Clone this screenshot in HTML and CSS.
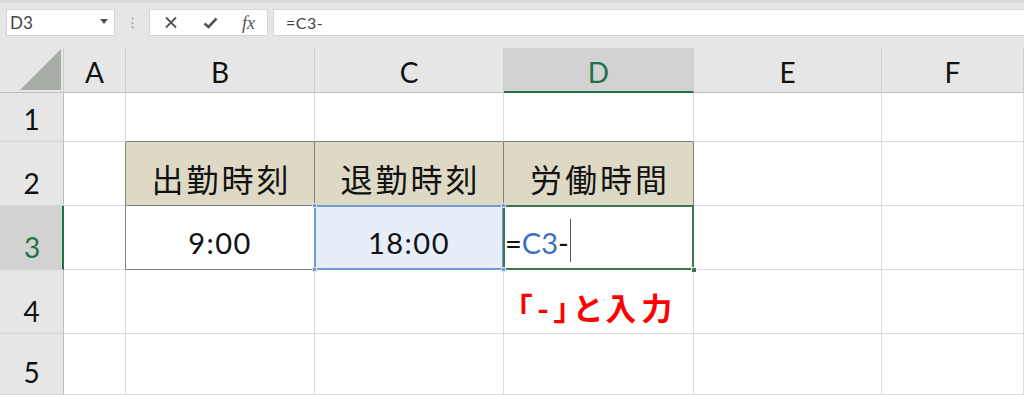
FILE: index.html
```html
<!DOCTYPE html>
<html lang="ja">
<head>
<meta charset="utf-8">
<title>Excel</title>
<link rel="stylesheet" href="styles.css">
</head>
<body>
<div class="fbar">
  <div class="namebox">
    <span class="nb-text">D3</span>
    <svg class="caret" width="8" height="5" viewBox="0 0 8 5"><path d="M0 0H8L4 5Z" fill="#555"/></svg>
  </div>
  <div class="grip">
    <svg width="3" height="12" viewBox="0 0 3 12"><circle cx="1.5" cy="1.5" r="1" fill="#9a9a9a"/><circle cx="1.5" cy="6" r="1" fill="#9a9a9a"/><circle cx="1.5" cy="10.5" r="1" fill="#9a9a9a"/></svg>
  </div>
  <div class="fbtns">
    <svg class="ico" width="14" height="13" viewBox="0 0 14 13"><path d="M2 1.5L12 11.5M12 1.5L2 11.5" stroke="#555" stroke-width="1.8" fill="none"/></svg>
    <svg class="ico" width="15" height="12" viewBox="0 0 15 12"><path d="M1.5 6.5L5.5 10L13.5 1.5" stroke="#555" stroke-width="2.6" fill="none"/></svg>
    <span class="fx">fx</span>
  </div>
  <div class="finput">=C3-</div>
</div>
<div class="sheet">
  <div class="corner"><svg width="41" height="41" viewBox="0 0 41 41"><path d="M41 0V41H0Z" fill="#a9ada8"/></svg></div>
  <div class="ch">A</div>
  <div class="ch">B</div>
  <div class="ch">C</div>
  <div class="ch ch-sel">D</div>
  <div class="ch">E</div>
  <div class="ch">F</div>

  <div class="rh">1</div>
  <div class="c"></div>
  <div class="c bb"></div>
  <div class="c bb"></div>
  <div class="c bb"></div>
  <div class="c"></div>
  <div class="c"></div>

  <div class="rh">2</div>
  <div class="c br"></div>
  <div class="c t th">出勤時刻</div>
  <div class="c t th">退勤時刻</div>
  <div class="c t th">労働時間</div>
  <div class="c"></div>
  <div class="c"></div>

  <div class="rh rh-sel">3</div>
  <div class="c br"></div>
  <div class="c t num">9:00</div>
  <div class="c t num ref">18:00<span class="h h-tl"></span><span class="h h-tr"></span><span class="h h-bl"></span><span class="h h-br"></span></div>
  <div class="c t edit"><span class="eq">=</span><span class="blue">C3</span><span>-</span><span class="cursor"></span><span class="handle"></span></div>
  <div class="c"></div>
  <div class="c"></div>

  <div class="rh">4</div>
  <div class="c"></div>
  <div class="c"></div>
  <div class="c"></div>
  <div class="c note"><span>「-」と入力</span></div>
  <div class="c"></div>
  <div class="c"></div>

  <div class="rh">5</div>
  <div class="c"></div>
  <div class="c"></div>
  <div class="c"></div>
  <div class="c"></div>
  <div class="c"></div>
  <div class="c"></div>
</div>
</body>
</html>
```
FILE: styles.css
```css
* { box-sizing: border-box; }
html, body {
  margin: 0;
  padding: 0;
  width: 1024px;
  height: 395px;
  overflow: hidden;
  background: #ffffff;
  font-family: "Lato", "Noto Sans CJK JP", sans-serif;
}

.fbar {
  height: 48px;
  background: #e6e6e6;
  border-top: 3px solid #dadada;
  display: flex;
  align-items: flex-start;
  padding: 6px 0 0 6px;
}
.namebox {
  width: 109px;
  height: 27px;
  background: #fff;
  border: 1px solid #d6d6d6;
  display: flex;
  align-items: center;
  justify-content: space-between;
  padding: 0 6px 0 3px;
}
.nb-text {
  font-size: 17px;
  color: #444;
  line-height: 1;
}
.caret { margin-top: -2px; }
.grip {
  width: 34px;
  height: 27px;
  display: flex;
  align-items: center;
  justify-content: center;
}
.fbtns {
  width: 119px;
  height: 27px;
  background: #fff;
  border: 1px solid #d6d6d6;
  display: flex;
  align-items: center;
  padding-left: 14px;
  gap: 25px;
}
.fx {
  font-family: "Liberation Serif", serif;
  font-style: italic;
  font-size: 18px;
  color: #555;
  line-height: 1;
  margin-left: -1px;
}
.finput {
  margin-left: 5px;
  flex: 1;
  height: 27px;
  background: #fff;
  border: 1px solid #d6d6d6;
  border-right: none;
  font-size: 16px;
  color: #444;
  display: flex;
  align-items: center;
  padding-left: 12px;
  letter-spacing: 0.5px;
}

.sheet {
  display: grid;
  grid-template-columns: 64px 62px 189px 189px 190px 188px 142px;
  grid-template-rows: 45px 49px 64px 64px 64px 61px;
  height: 347px;
}
.corner {
  background: #e6e6e6;
  border-right: 1px solid #cfcfcf;
  border-bottom: 1px solid #bfbfbf;
  display: flex;
  align-items: flex-end;
  justify-content: flex-end;
  padding: 0 2px 2px 0;
}
.ch {
  background: #e6e6e6;
  border-right: 1px solid #cfcfcf;
  border-bottom: 1px solid #bfbfbf;
  display: flex;
  align-items: center;
  justify-content: center;
  font-size: 28px;
  line-height: 1;
  color: #111;
  padding-top: 4px;
}
.ch-sel {
  background: #d2d2d2;
  color: #217346;
  border-bottom: 2px solid #217346;
  padding-top: 5px;
}
.rh {
  background: #e6e6e6;
  border-right: 1px solid #bfbfbf;
  border-bottom: 1px solid #d4d4d4;
  display: flex;
  align-items: flex-end;
  justify-content: center;
  font-size: 28px;
  line-height: 1;
  color: #111;
  padding-bottom: 8px;
}
.rh-sel {
  background: #d2d2d2;
  color: #217346;
  border-right: 2px solid #217346;
  padding-left: 2px;
}

.c {
  position: relative;
  border-right: 1px solid #dcdcdc;
  border-bottom: 1px solid #dcdcdc;
}
.c.bb { border-bottom-color: #7f7f7f; }
.c.br { border-right-color: #7f7f7f; }
.c.t {
  border-right-color: #7f7f7f;
  border-bottom-color: #7f7f7f;
  display: flex;
  align-items: center;
  justify-content: center;
  line-height: 1;
  color: #111;
}
.th {
  background: #ddd9c4;
  font-family: "Noto Sans CJK JP", sans-serif;
  font-size: 32px;
  letter-spacing: 3px;
  padding: 8px 0 0 3px;
}
.num {
  font-size: 29px;
  letter-spacing: 1.5px;
  padding-top: 9px;
}
.ref {
  background: #e8eef9;
}
.ref::after {
  content: "";
  position: absolute;
  top: -1px;
  left: -1px;
  right: -1px;
  bottom: -1px;
  border: 2px solid #7398d6;
}
.h {
  position: absolute;
  width: 5px;
  height: 5px;
  background: #7398d6;
  border: 1px solid #dfe7f5;
  z-index: 2;
}
.h-tl { top: -3px; left: -3px; }
.h-tr { top: -3px; right: -3px; }
.h-bl { bottom: -3px; left: -3px; }
.h-br { bottom: -3px; right: -3px; }

.c.edit {
  justify-content: flex-start;
  font-size: 29px;
  padding: 9px 0 0 1px;
}
.edit::after {
  content: "";
  position: absolute;
  top: -1px;
  left: -1px;
  right: -1px;
  bottom: -1px;
  border: 2px solid #3d7650;
}
.blue { color: #3f6fbf; }
.cursor {
  display: inline-block;
  width: 1px;
  height: 43px;
  background: #555;
  margin-left: 1px;
  margin-top: -4px;
}
.handle {
  position: absolute;
  right: -4px;
  bottom: -4px;
  width: 6px;
  height: 6px;
  background: #3d7650;
  border: 1px solid #fff;
  z-index: 2;
}
.note {
  display: flex;
  align-items: center;
  justify-content: center;
  padding: 9px 3px 0 0;
}
.note span {
  font-family: "Noto Sans CJK JP", sans-serif;
  font-weight: 700;
  font-size: 31px;
  line-height: 1;
  letter-spacing: 5px;
  font-feature-settings: "palt";
  white-space: nowrap;
  color: #ff0000;
}
```
